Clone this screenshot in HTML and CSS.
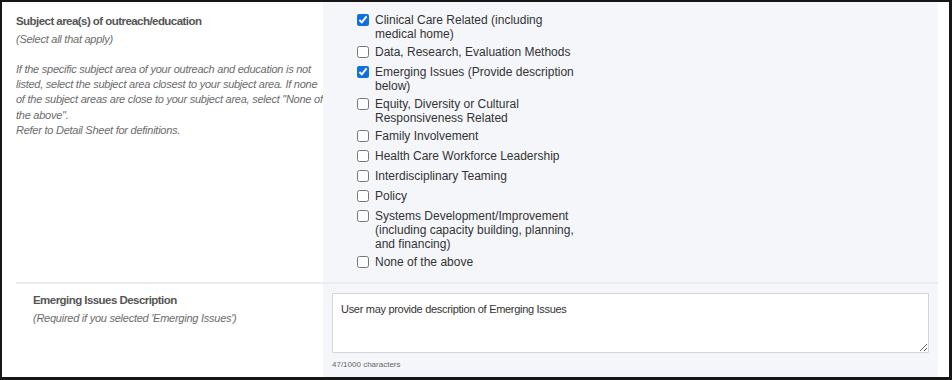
FILE: index.html
```html
<!DOCTYPE html>
<html lang="en">
<head>
  <meta charset="UTF-8">
  <meta name="viewport" content="width=device-width, initial-scale=1.0">
  <title>Outreach and Education</title>
  <link rel="stylesheet" href="styles.css">
</head>
<body>
  <div class="frame">
    <div class="form-row first">
      <div class="row-label">
        <div class="label-title">Subject area(s) of outreach/education</div>
        <div class="label-note">(Select all that apply)</div>
        <div class="label-help">
          If the specific subject area of your outreach and education is not listed, select the subject area closest to your subject area. If none of the subject areas are close to your subject area, select "None of the above".<br>
          Refer to Detail Sheet for definitions.
        </div>
      </div>
      <div class="row-field">
        <div class="check-list">
          <label class="check-item"><input type="checkbox" checked><span>Clinical Care Related (including medical home)</span></label>
          <label class="check-item"><input type="checkbox"><span>Data, Research, Evaluation Methods</span></label>
          <label class="check-item"><input type="checkbox" checked><span>Emerging Issues (Provide description below)</span></label>
          <label class="check-item"><input type="checkbox"><span>Equity, Diversity or Cultural Responsiveness Related</span></label>
          <label class="check-item"><input type="checkbox"><span>Family Involvement</span></label>
          <label class="check-item"><input type="checkbox"><span>Health Care Workforce Leadership</span></label>
          <label class="check-item"><input type="checkbox"><span>Interdisciplinary Teaming</span></label>
          <label class="check-item"><input type="checkbox"><span>Policy</span></label>
          <label class="check-item"><input type="checkbox"><span>Systems Development/Improvement (including capacity building, planning, and financing)</span></label>
          <label class="check-item"><input type="checkbox"><span>None of the above</span></label>
        </div>
      </div>
    </div>

    <div class="form-row second">
      <div class="row-label">
        <div class="label-title">Emerging Issues Description</div>
        <div class="label-note">(Required if you selected 'Emerging Issues')</div>
      </div>
      <div class="row-field">
        <textarea class="desc-box">User may provide description of Emerging Issues</textarea>
        <div class="char-count">47/1000 characters</div>
      </div>
    </div>
  </div>
</body>
</html>
```

FILE: styles.css
```css
body {
  margin: 0;
  font-family: 'Liberation Sans', Arial, sans-serif;
  background: #fff;
}
.frame {
  width: 952px;
  height: 380px;
  box-sizing: border-box;
  border: 2px solid #161616;
  border-right-width: 3px;
  border-bottom-width: 3px;
  padding-right: 11px;
  background: #fff;
  display: flex;
  flex-direction: column;
}
.form-row {
  display: flex;
}
.form-row.first {
  height: 280px;
}
.form-row.second {
  flex: 1;
  margin-left: 14px;
  border-top: 2px solid #ececee;
}
.row-label {
  box-sizing: border-box;
}
.first .row-label {
  width: 321px;
  padding: 12px 0 0 14px;
}
.second .row-label {
  width: 307px;
  padding: 9px 0 0 17px;
}
.row-field {
  flex: 1;
  background: #f5f6fa;
}
.label-title {
  font-size: 11.5px;
  font-weight: bold;
  letter-spacing: -0.55px;
  color: #555;
  line-height: 15px;
}
.label-note {
  margin-top: 3px;
  font-size: 11px;
  font-style: italic;
  letter-spacing: -0.25px;
  color: #6b6b6b;
  line-height: 15px;
}
.label-help {
  margin-top: 15px;
  font-size: 11px;
  font-style: italic;
  letter-spacing: -0.25px;
  color: #6b6b6b;
  line-height: 15.2px;
}
.check-list {
  padding: 9px 0 0 34px;
  width: 220px;
}
.check-item {
  display: flex;
  align-items: flex-start;
  padding: 2px 0;
  font-size: 12px;
  line-height: 14px;
  color: #333;
}
.check-item input {
  width: 12px;
  height: 12px;
  margin: 1px 6px 3px 0;
  flex-shrink: 0;
  accent-color: #1170e0;
}
.second .row-field {
  padding: 9px 9px 0 9px;
}
.desc-box {
  display: block;
  width: 100%;
  height: 60px;
  box-sizing: border-box;
  border: 1px solid #d4d4d8;
  border-radius: 1px;
  background: #fff;
  padding: 8px 8px;
  font-family: 'Liberation Sans', Arial, sans-serif;
  font-size: 11px;
  letter-spacing: -0.3px;
  line-height: 14px;
  color: #333;
  resize: vertical;
}
.char-count {
  margin-top: 7px;
  font-size: 8px;
  color: #666;
}
```
